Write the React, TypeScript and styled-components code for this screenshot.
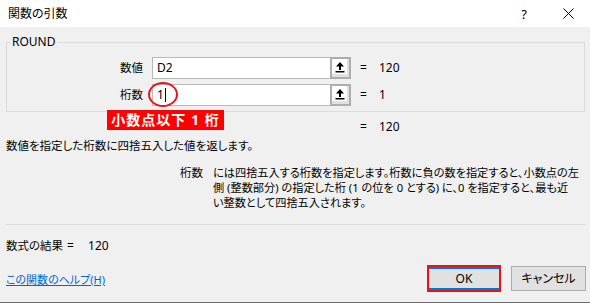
import React from "react";
import styled, { createGlobalStyle } from "styled-components";

const GlobalStyle = createGlobalStyle`
  html, body { margin: 0; padding: 0; background: #f0f0f0; }
  body {
    font-family: "Noto Sans", "Noto Sans CJK JP", sans-serif;
    font-size: 11.5px;
    color: #000;
  }
`;

const Window = styled.div`
  width: 590px;
  height: 303px;
  box-sizing: border-box;
  background: #f0f0f0;
  border-bottom: 1px solid #6d6d6d;
  display: flex;
  flex-direction: column;
  font-feature-settings: "palt";
`;

const TitleBar = styled.div`
  height: 27px;
  flex: none;
  background: #fff;
  display: flex;
  align-items: center;
  padding-left: 8px;
  padding-right: 16px;
`;

const Title = styled.div`
  flex: 1;
  font-size: 12px;
  line-height: 16px;
  color: #000;
`;

const TitleControls = styled.div`
  display: flex;
  align-items: center;
  gap: 36px;
`;

const HelpMark = styled.span`
  font-size: 13px;
  line-height: 16px;
  color: #000;
`;

const Body = styled.div`
  position: relative;
  flex: 1;
  display: flex;
  flex-direction: column;
  padding: 0 5px 0 6px;
`;

const Group = styled.div`
  position: relative;
  margin-top: 15px;
  border: 1px solid #dcdcdc;
  padding: 14px 0 5px 0;
  display: flex;
  flex-direction: column;
  gap: 5px;
`;

const Legend = styled.span`
  position: absolute;
  left: 3px;
  top: -9px;
  padding: 0 2px;
  background: #f0f0f0;
  line-height: 16px;
  font-size: 12px;
`;

const ArgRow = styled.div`
  display: flex;
  align-items: center;
  height: 22px;
`;

const ArgLabel = styled.div`
  width: 136px;
  text-align: right;
  line-height: 16px;
`;

const RefInput = styled.div`
  margin-left: 9px;
  display: flex;
  height: 22px;
`;

const InputField = styled.div`
  width: 178px;
  box-sizing: border-box;
  height: 22px;
  background: #fff;
  border: 1px solid #b9b9b9;
  border-right: none;
  padding: 0 4px;
  display: flex;
  align-items: center;
  line-height: 16px;
  font-size: 12px;
`;

const Caret = styled.span`
  display: inline-block;
  width: 1px;
  height: 14px;
  background: #000;
  margin-left: 1px;
`;

const CollapseButton = styled.div`
  width: 21px;
  height: 22px;
  box-sizing: border-box;
  border: 2px solid #adadad;
  background: #fff;
  box-shadow: inset -2px -3px 0 #e1e1e1;
  display: flex;
  align-items: flex-start;
  justify-content: center;
  padding-top: 2px;
  padding-right: 1px;
`;

const Eq = styled.span`
  display: inline-block;
  width: 19px;
  line-height: 16px;
  font-size: 12px;
`;

const Value = styled.span`
  line-height: 16px;
  font-size: 12px;
`;

const EqCell = styled.div`
  margin-left: 9px;
  display: flex;
  align-items: center;
`;

const ResultRow = styled.div`
  margin-top: 7px;
  padding-left: 354px;
  display: flex;
  line-height: 16px;
`;

const Description = styled.div`
  margin-top: 3px;
  line-height: 16px;
`;

const ArgHelp = styled.div`
  margin-top: 11px;
  display: flex;
  gap: 10px;
  line-height: 15px;
`;

const ArgHelpName = styled.div`
  width: 197px;
  flex: none;
  text-align: right;
`;

const ArgHelpText = styled.div`
  display: flex;
  flex-direction: column;
  white-space: nowrap;
  font-size: 11.2px;
`;

const Separator = styled.div`
  margin-top: 14px;
  height: 1px;
  background: #dcdcdc;
`;

const FormulaResult = styled.div`
  margin-top: 13px;
  line-height: 16px;
  display: flex;
`;

const FormulaEq = styled.span`
  margin-left: 4px;
  width: 21px;
  font-size: 12px;
`;

const FormulaValue = styled.span`
  font-size: 12px;
`;

const Footer = styled.div`
  margin-top: 11px;
  display: flex;
  align-items: center;
  justify-content: space-between;
`;

const HelpLink = styled.a`
  color: #0066cc;
  text-decoration: underline;
  line-height: 16px;
  margin-top: 3px;
  cursor: pointer;
  font-size: 11px;
`;

const Buttons = styled.div`
  display: flex;
  align-items: center;
  gap: 10px;
  margin-right: -1px;
`;

const DialogButton = styled.button<{ $focused?: boolean }>`
  font-family: inherit;
  font-size: 12px;
  color: #000;
  background: #e1e1e1;
  box-sizing: border-box;
  width: ${(p) => (p.$focused ? "74px" : "75px")};
  height: ${(p) => (p.$focused ? "27px" : "25px")};
  border: ${(p) => (p.$focused ? "2px solid #ee1111" : "1px solid #adadad")};
  box-shadow: ${(p) =>
    p.$focused ? "inset 0 2px 0 #0078d7, inset 0 -2px 0 #0078d7" : "none"};
  padding: 0;
  line-height: 16px;
  font-feature-settings: "palt";
`;

const Annotation = styled.div`
  position: absolute;
  left: 107px;
  top: 83px;
  width: 117px;
  height: 20px;
  background: #ff0000;
  color: #fff;
  font-weight: bold;
  font-size: 14px;
  line-height: 20px;
  text-align: center;
  letter-spacing: 1px;
`;

const CircleMark = styled.div`
  position: absolute;
  left: 148px;
  top: 55px;
  width: 30px;
  height: 25px;
  box-sizing: border-box;
  border: 2px solid #e8141b;
  border-radius: 50%;
`;

const UpArrow = () => (
  <svg width="10" height="12" viewBox="0 0 10 12">
    <path d="M5 1 L9 5.5 L6 5.5 L6 9 L4 9 L4 5.5 L1 5.5 Z" fill="#000" />
    <rect x="0.5" y="10" width="9" height="1.5" fill="#000" />
  </svg>
);

const CloseIcon = () => (
  <svg width="11" height="11" viewBox="0 0 11 11">
    <path d="M0.5 0.5 L10.5 10.5 M10.5 0.5 L0.5 10.5" stroke="#000" strokeWidth="1" />
  </svg>
);

export default function App() {
  return (
    <>
      <GlobalStyle />
      <Window>
        <TitleBar>
          <Title>関数の引数</Title>
          <TitleControls>
            <HelpMark>?</HelpMark>
            <CloseIcon />
          </TitleControls>
        </TitleBar>
        <Body>
          <Group>
            <Legend>ROUND</Legend>
            <ArgRow>
              <ArgLabel>数値</ArgLabel>
              <RefInput>
                <InputField>D2</InputField>
                <CollapseButton>
                  <UpArrow />
                </CollapseButton>
              </RefInput>
              <EqCell>
                <Eq>=</Eq>
                <Value>120</Value>
              </EqCell>
            </ArgRow>
            <ArgRow>
              <ArgLabel>桁数</ArgLabel>
              <RefInput>
                <InputField>
                  1<Caret />
                </InputField>
                <CollapseButton>
                  <UpArrow />
                </CollapseButton>
              </RefInput>
              <EqCell>
                <Eq>=</Eq>
                <Value>1</Value>
              </EqCell>
            </ArgRow>
          </Group>
          <ResultRow>
            <Eq>=</Eq>
            <Value>120</Value>
          </ResultRow>
          <Description>数値を指定した桁数に四捨五入した値を返します。</Description>
          <ArgHelp>
            <ArgHelpName>桁数</ArgHelpName>
            <ArgHelpText>
              <span>には四捨五入する桁数を指定します。桁数に負の数を指定すると、小数点の左</span>
              <span>側 (整数部分) の指定した桁 (1 の位を 0 とする) に、0 を指定すると、最も近</span>
              <span>い整数として四捨五入されます。</span>
            </ArgHelpText>
          </ArgHelp>
          <Separator />
          <FormulaResult>
            <span>数式の結果</span>
            <FormulaEq>=</FormulaEq>
            <FormulaValue>120</FormulaValue>
          </FormulaResult>
          <Footer>
            <HelpLink>この関数のヘルプ(H)</HelpLink>
            <Buttons>
              <DialogButton $focused>OK</DialogButton>
              <DialogButton>キャンセル</DialogButton>
            </Buttons>
          </Footer>
          <Annotation>小数点以下 1 桁</Annotation>
          <CircleMark />
        </Body>
      </Window>
    </>
  );
}
